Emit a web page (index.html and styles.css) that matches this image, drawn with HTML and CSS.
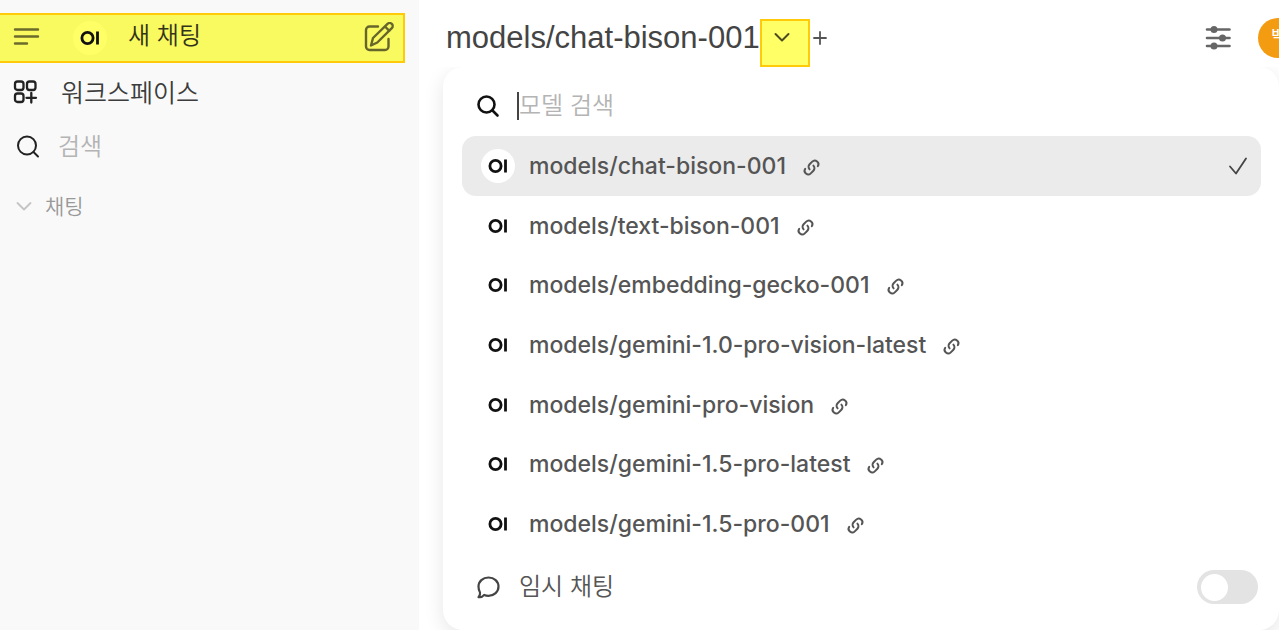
FILE: index.html
```html
<!DOCTYPE html>
<html lang="ko">
<head>
<meta charset="utf-8">
<title>새 채팅</title>
<link rel="stylesheet" href="styles.css">
</head>
<body>
<svg class="defs" aria-hidden="true">
  <symbol id="oi" viewBox="0 0 34 34">
    <circle cx="14.500" cy="17" r="5.600" fill="none" stroke="#111" stroke-width="2.800"/>
    <path d="M24.500 10.500v13" stroke="#111" stroke-width="2.800"/>
  </symbol>
  <symbol id="link" viewBox="0 0 16 16">
    <path fill="currentColor" d="M8.914 6.025a.75.75 0 0 1 1.060 0 3.500 3.500 0 0 1 0 4.950l-2 2a3.500 3.500 0 0 1-5.396-4.402.75.75 0 0 1 1.251.827 2 2 0 0 0 3.085 2.514l2-2a2 2 0 0 0 0-2.828.75.75 0 0 1 0-1.060Z"/>
    <path fill="currentColor" d="M7.086 9.975a.75.75 0 0 1-1.060 0 3.500 3.500 0 0 1 0-4.950l2-2a3.500 3.500 0 0 1 5.396 4.402.75.75 0 0 1-1.251-.827 2 2 0 0 0-3.085-2.514l-2 2a2 2 0 0 0 0 2.828.75.75 0 0 1 0 1.060Z"/>
  </symbol>
</svg>
<div class="app">
  <aside class="sidebar">
    <div class="new-chat">
      <button class="icon-button" aria-label="메뉴">
        <svg width="28" height="28" viewBox="0 0 28 28" fill="none" stroke="#6b6b2c" stroke-width="2.400" stroke-linecap="round"><path d="M3 5.500h23M3 12.500h23M3 19.500h12"/></svg>
      </button>
      <button class="new-chat-button">
        <svg class="logo logo-tinted"><use href="#oi"/></svg>
        <span class="new-chat-label">새 채팅</span>
        <svg width="32" height="32" viewBox="0 0 32 32" fill="none" stroke="#66662c" stroke-width="2.400" stroke-linecap="round" stroke-linejoin="round"><path d="M15 4.500H6.500A3.500 3.500 0 0 0 3 8v16.500A3.500 3.500 0 0 0 6.500 28H22a3.500 3.500 0 0 0 3.500-3.500V17"/><path d="M8 23.500l2-7.500L24.500 1.900a3 3 0 0 1 4.300 4.300L14.300 20.500zM22 4.500l4.300 4.300"/></svg>
      </button>
    </div>
    <nav class="nav">
      <a class="workspace" href="#">
        <svg width="26" height="26" viewBox="0 0 26 26" fill="none" stroke="#222" stroke-width="2.300" stroke-linecap="round"><rect x="3" y="3.500" width="8.500" height="8.500" rx="2.500"/><rect x="15" y="3.500" width="8.500" height="8.500" rx="2.500"/><rect x="3" y="15.500" width="8.500" height="8.500" rx="2.500"/><path d="M19.300 15v9.500M14.500 19.800h9.500"/></svg>
        <span>워크스페이스</span>
      </a>
      <label class="side-search">
        <svg width="26" height="26" viewBox="0 0 26 26" fill="none" stroke="#222" stroke-width="2" stroke-linecap="round"><circle cx="11" cy="12.500" r="9"/><path d="M17.500 19l4.500 4.500"/></svg>
        <input type="text" placeholder="검색" aria-label="검색">
      </label>
      <button class="chats">
        <svg width="16" height="16" viewBox="0 0 16 16" fill="none" stroke="#c4c4c4" stroke-width="1.800" stroke-linecap="round" stroke-linejoin="round"><path d="M1.500 5l6.500 6.500L14.500 5"/></svg>
        <span>채팅</span>
      </button>
    </nav>
  </aside>
  <main class="main">
    <header class="topbar">
      <h1 class="title">models/chat-bison-001</h1>
      <button class="model-toggle" aria-label="모델 선택">
        <svg width="16" height="16" viewBox="0 0 16 16" fill="none" stroke="#4b4b24" stroke-width="2" stroke-linecap="round" stroke-linejoin="round"><path d="M1.500 5l6.500 6.500L14.500 5"/></svg>
      </button>
      <button class="add" aria-label="모델 추가">
        <svg width="16" height="16" viewBox="0 0 16 16" stroke="#555" stroke-width="1.800" stroke-linecap="round"><path d="M8 2v12M2 8h12"/></svg>
      </button>
      <button class="icon-button controls" aria-label="제어">
        <svg width="28" height="28" viewBox="0 0 28 28" fill="#666" stroke="#666" stroke-width="2.600" stroke-linecap="round"><path d="M3 5.500h22.500M3 14h22.500M3 22h22.500"/><g stroke="none"><circle cx="10" cy="5.500" r="3.500"/><circle cx="18.500" cy="14" r="3.500"/><circle cx="10" cy="22" r="3.500"/></g></svg>
      </button>
      <button class="avatar" aria-label="사용자">박</button>
    </header>
    <section class="menu">
      <label class="model-search">
        <svg width="26" height="26" viewBox="0 0 26 26" fill="none" stroke="#111" stroke-width="2.600" stroke-linecap="round"><circle cx="11.500" cy="11.500" r="8"/><path d="M17.500 17.500l5 5"/></svg>
        <input type="text" placeholder="모델 검색" aria-label="모델 검색">
      </label>
      <div class="models">
        <button class="model selected"><svg class="logo"><use href="#oi"/></svg><span>models/chat-bison-001</span><svg class="link"><use href="#link"/></svg>
          <svg class="check" width="22" height="22" viewBox="0 0 22 22" fill="none" stroke="#444" stroke-width="1.800" stroke-linecap="round" stroke-linejoin="round"><path d="M3 11.500l6 7L19 3.500"/></svg></button>
        <button class="model"><svg class="logo"><use href="#oi"/></svg><span>models/text-bison-001</span><svg class="link"><use href="#link"/></svg></button>
        <button class="model"><svg class="logo"><use href="#oi"/></svg><span>models/embedding-gecko-001</span><svg class="link"><use href="#link"/></svg></button>
        <button class="model"><svg class="logo"><use href="#oi"/></svg><span>models/gemini-1.0-pro-vision-latest</span><svg class="link"><use href="#link"/></svg></button>
        <button class="model"><svg class="logo"><use href="#oi"/></svg><span>models/gemini-pro-vision</span><svg class="link"><use href="#link"/></svg></button>
        <button class="model"><svg class="logo"><use href="#oi"/></svg><span>models/gemini-1.5-pro-latest</span><svg class="link"><use href="#link"/></svg></button>
        <button class="model"><svg class="logo"><use href="#oi"/></svg><span>models/gemini-1.5-pro-001</span><svg class="link"><use href="#link"/></svg></button>
      </div>
      <label class="temporary">
        <svg width="26" height="26" viewBox="0 0 26 26" fill="none" stroke="#444" stroke-width="2.200" stroke-linejoin="round"><path d="M13.500 3.500c5.700 0 10 4 10 9.100s-4.300 9.200-10 9.200c-1.600 0-3-.3-4.300-.9-1.300 1.600-3.700 2.600-5.700 2.200 1-1.200 1.900-3 1.500-4.600-1-1.500-1.500-3.700-1.500-5.900 0-5.100 4.300-9.100 10-9.100z"/></svg>
        <span>임시 채팅</span>
        <input class="switch" type="checkbox" role="switch">
      </label>
    </section>
  </main>
</div>
</body>
</html>
```
FILE: styles.css
```css
* { box-sizing: border-box; }

body {
  margin: 0;
  background: #fff;
  color: #555;
  font-family: Inter, "Noto Sans CJK KR", sans-serif;
  font-size: 24px;
  overflow: hidden;
}

button, input {
  font: inherit;
  color: inherit;
  border: 0;
  padding: 0;
  background: none;
}

button { cursor: pointer; }
svg { display: block; flex: none; }
.defs { position: absolute; width: 0; height: 0; }

.app { display: flex; min-height: 100vh; }

/* Sidebar */
.sidebar {
  flex: none;
  width: 419px;
  padding: 13px 14px 0 0;
  background: #f9f9f9;
  font-family: "Noto Sans CJK KR", sans-serif;
  font-weight: 350;
}

.new-chat {
  display: flex;
  align-items: center;
  height: 50px;
  padding: 0 8px 0 12px;
  border: 2px solid #ffcb08;
  border-left: 0;
  background: #f9f960;
}

.new-chat-button {
  flex: 1;
  display: flex;
  align-items: center;
  margin-left: 33px;
  color: #33331a;
  text-align: left;
}

.new-chat-label { flex: 1; margin-left: 21px; line-height: 32px; padding-bottom: 8px; }
.logo { width: 34px; height: 34px; border-radius: 50%; background: #fff; }
.logo-tinted { background: #ffff66; }

.nav { display: flex; flex-direction: column; }

.workspace {
  display: flex;
  align-items: center;
  gap: 23px;
  height: 56px;
  padding-left: 12px;
  color: #3c3c3c;
  font-size: 25px;
  text-decoration: none;
}

.side-search {
  display: flex;
  align-items: center;
  gap: 16px;
  height: 54px;
  padding-left: 16px;
}

input { padding-bottom: 4px; }
.side-search input { flex: 1; min-width: 0; height: 40px; }
input::placeholder { color: #b4b4b4; opacity: 1; }

.chats {
  display: flex;
  align-items: center;
  gap: 13px;
  height: 65px;
  padding-left: 16px;
  color: #999;
  font-size: 21px;
}

.chats span { padding-bottom: 2px; }

/* Main column */
.main { flex: 1; min-width: 0; display: flex; flex-direction: column; }

.topbar {
  display: flex;
  align-items: center;
  height: 67px;
  padding: 8px 0 0 27px;
}

.title {
  margin: 0;
  color: #444;
  font-family: "Liberation Sans", sans-serif;
  font-size: 31px;
  font-weight: 400;
}

.model-toggle {
  display: flex;
  justify-content: center;
  width: 50px;
  height: 48px;
  padding: 8px 6px 0 0;
  border: 2px solid #ffcb08;
  background: #ffff66;
  align-self: flex-end;
}

.add { margin-left: 2px; }
.controls { margin-left: auto; margin-right: 26px; }

.avatar {
  flex: none;
  width: 40px;
  height: 40px;
  margin-right: -19px;
  padding-bottom: 8px;
  border-radius: 50%;
  background: #f39c12;
  color: #fff;
  font-size: 14px;
  font-weight: 500;
}

/* Model menu */
.menu {
  flex: 1;
  display: flex;
  flex-direction: column;
  margin-left: 24px;
  padding: 8px 18px 0 19px;
  border-radius: 20px;
  box-shadow: 0 6px 20px rgba(0, 0, 0, 0.1);
  clip-path: inset(0 0 -40px -30px);
}

.model-search {
  display: flex;
  align-items: center;
  gap: 16px;
  height: 61px;
  padding-left: 13px;
}

.model-search input {
  flex: 1;
  min-width: 0;
  height: 28px;
  border-left: 2px solid #444;
  outline: 0;
  font-family: "Noto Sans CJK KR", sans-serif;
  font-weight: 350;
}

.models { display: grid; grid-auto-rows: 1fr; min-height: 418px; }

.model {
  display: flex;
  align-items: center;
  padding: 0 12px 0 19px;
  border-radius: 14px;
  font-size: 23px;
  font-weight: 500;
  font-optical-sizing: none;
  text-align: left;
}

.model span { margin: 0 15px 0 14px; }
.selected { background: #ebebeb; }
.link { width: 21px; height: 21px; margin-top: 3px; }
.check { margin-left: auto; }

.temporary {
  display: flex;
  align-items: center;
  gap: 18px;
  height: 66px;
  padding: 0 3px 0 13px;
  font-family: "Noto Sans CJK KR", sans-serif;
  font-weight: 350;
}

.temporary span { padding-bottom: 5px; }

.switch {
  appearance: none;
  display: flex;
  align-items: center;
  width: 61px;
  height: 34px;
  margin: 0 0 0 auto;
  padding: 4px;
  border-radius: 17px;
  background: #e3e3e3;
}

.switch::before {
  content: "";
  width: 27px;
  height: 27px;
  border-radius: 50%;
  background: #fff;
}

.switch:checked { justify-content: flex-end; background: #4caf50; }
```
